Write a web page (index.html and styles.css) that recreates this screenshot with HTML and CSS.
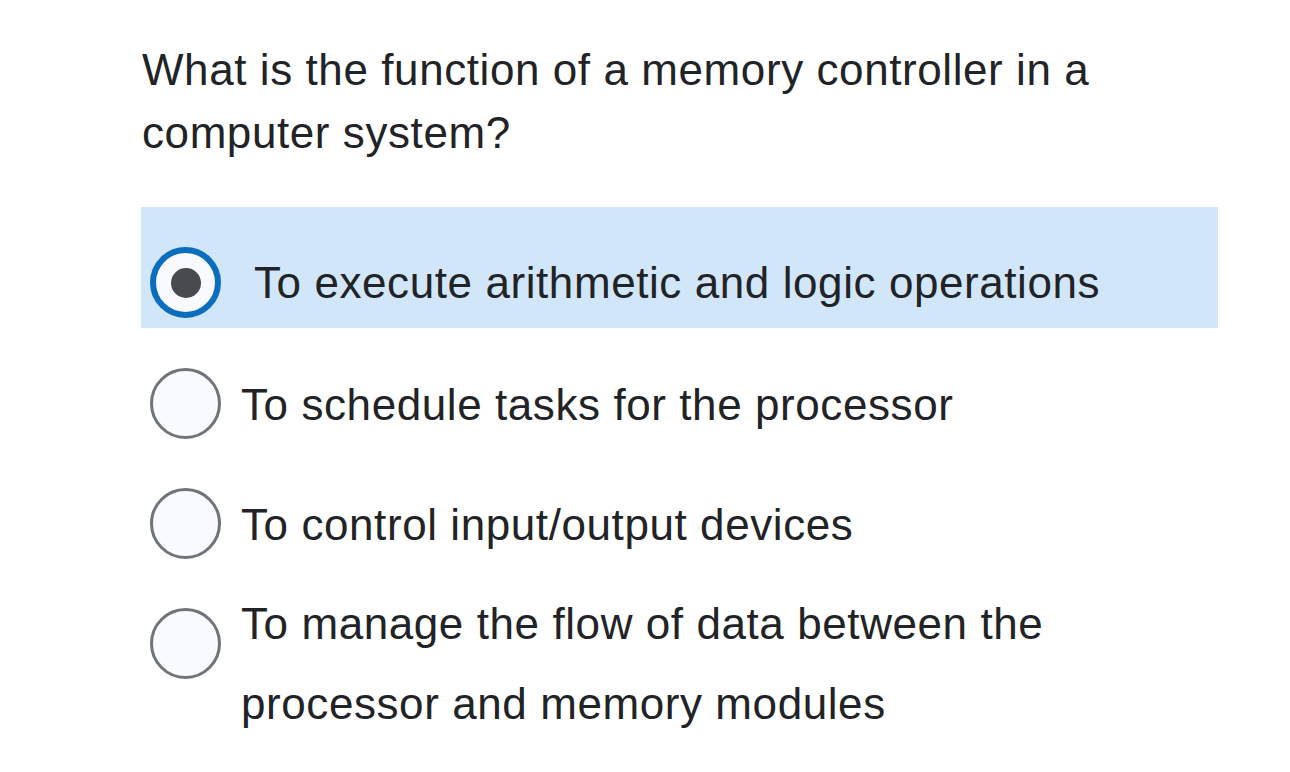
FILE: index.html
```html
<!DOCTYPE html>
<html lang="en">
<head>
<meta charset="utf-8">
<title>Quiz question</title>
<link rel="stylesheet" href="styles.css">
</head>
<body>
<main class="quiz">
  <h1 class="question">What is the function of a memory controller in a computer system?</h1>
  <ul class="options">
    <li class="option option--selected">
      <span class="radio radio--checked"><span class="radio-dot"></span></span>
      <span class="label">To execute arithmetic and logic operations</span>
    </li>
    <li class="option">
      <span class="radio"></span>
      <span class="label">To schedule tasks for the processor</span>
    </li>
    <li class="option">
      <span class="radio"></span>
      <span class="label">To control input/output devices</span>
    </li>
    <li class="option option--multi">
      <span class="radio"></span>
      <span class="label">To manage the flow of data between the processor and memory modules</span>
    </li>
  </ul>
</main>
</body>
</html>
```

FILE: styles.css
```css
html, body {
  margin: 0;
  padding: 0;
  background: #ffffff;
}

body {
  font-family: "Liberation Sans", Arial, Helvetica, sans-serif;
  color: #222326;
  letter-spacing: 0.58px;
}

.quiz {
  width: 1077px;
  margin-left: 141px;
  padding-top: 38px;
}

.question {
  margin: 0 0 43px 1px;
  font-size: 44px;
  font-weight: normal;
  line-height: 63px;
}

.options {
  list-style: none;
  margin: 0;
  padding: 0;
}

.option {
  display: flex;
  align-items: flex-start;
  box-sizing: border-box;
  min-height: 120px;
  padding: 40px 0 0 9px;
  font-size: 44px;
}

.option--selected {
  background: #d2e6f9;
  min-height: 121px;
}

.radio {
  flex: none;
  box-sizing: border-box;
  width: 71px;
  height: 71px;
  border-radius: 50%;
  border: 3px solid #6f7479;
  background: #f8faff;
  display: flex;
  align-items: center;
  justify-content: center;
}

.radio--checked {
  border: 6px solid #0a6ebf;
}

.radio-dot {
  width: 30px;
  height: 30px;
  border-radius: 50%;
  background: #474a4f;
}

.label {
  margin-left: 20px;
  margin-top: -3px;
  line-height: 80px;
}

.option--selected .label {
  margin-left: 33px;
  margin-top: -4px;
}

.option--multi .label {
  margin-top: -24px;
}
```
